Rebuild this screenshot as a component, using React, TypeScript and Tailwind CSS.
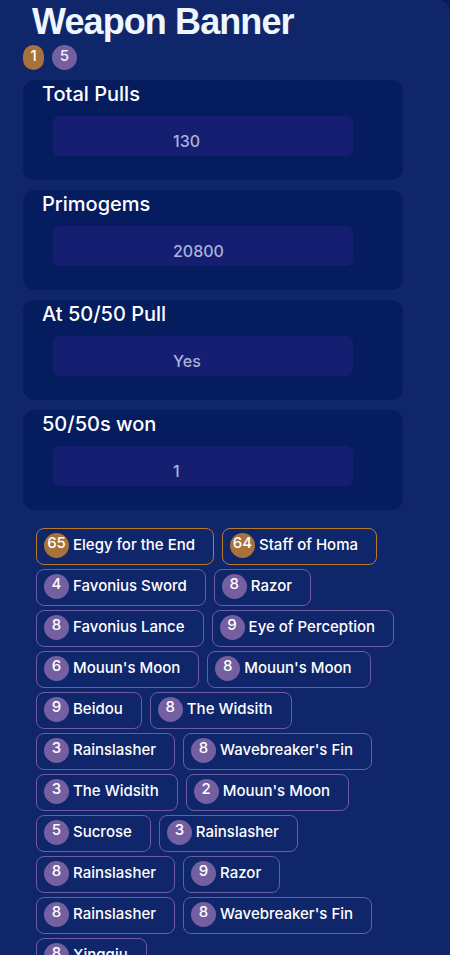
import React from "react";

type Pull = { count: number; name: string; gold?: boolean };

const stats = [
  { label: "Total Pulls", value: "130" },
  { label: "Primogems", value: "20800" },
  { label: "At 50/50 Pull", value: "Yes" },
  { label: "50/50s won", value: "1" },
];

const pulls: Pull[] = [
  { count: 65, name: "Elegy for the End", gold: true },
  { count: 64, name: "Staff of Homa", gold: true },
  { count: 4, name: "Favonius Sword" },
  { count: 8, name: "Razor" },
  { count: 8, name: "Favonius Lance" },
  { count: 9, name: "Eye of Perception" },
  { count: 6, name: "Mouun's Moon" },
  { count: 8, name: "Mouun's Moon" },
  { count: 9, name: "Beidou" },
  { count: 8, name: "The Widsith" },
  { count: 3, name: "Rainslasher" },
  { count: 8, name: "Wavebreaker's Fin" },
  { count: 3, name: "The Widsith" },
  { count: 2, name: "Mouun's Moon" },
  { count: 5, name: "Sucrose" },
  { count: 3, name: "Rainslasher" },
  { count: 8, name: "Rainslasher" },
  { count: 9, name: "Razor" },
  { count: 8, name: "Rainslasher" },
  { count: 8, name: "Wavebreaker's Fin" },
  { count: 8, name: "Xingqiu" },
];

function StatCard({ label, value }: { label: string; value: string }) {
  return (
    <div className="w-[380px] h-[100px] rounded-xl bg-[#051c5e] pl-[19px]">
      <div className="text-xl leading-7 font-medium text-white">{label}</div>
      <div className="mt-2 ml-[11px] w-[300px] h-10 rounded-md bg-[#151e70] pl-[120px] pt-[13px] text-base leading-6 font-medium text-[#aab4d7]">
        {value}
      </div>
    </div>
  );
}

function PullChip({ pull }: { pull: Pull }) {
  return (
    <div
      className={`flex items-center gap-1 h-[37px] rounded-lg border pl-[7px] pr-[18px] pt-[3px] pb-[6px] ${
        pull.gold ? "border-[#b97a28]" : "border-[#6e5aa0]"
      }`}
    >
      <span
        className={`flex items-center justify-center w-[25px] h-[25px] rounded-full pb-[3px] text-[15px] font-medium text-white ${
          pull.gold ? "bg-[#a8723a]" : "bg-[#7460a0]"
        }`}
      >
        {pull.count}
      </span>
      <span className="text-[15px] font-medium text-white">{pull.name}</span>
    </div>
  );
}

export default function App() {
  return (
    <div className="min-h-screen bg-[#0b1b4c] font-['Inter',sans-serif]">
      <div className="min-h-screen bg-[#10266a] rounded-tr-xl px-[23px] pt-[2px] pb-10">
        <h1 className="ml-[9px] font-['Liberation_Sans',Arial,sans-serif] text-4xl leading-10 font-bold tracking-tight text-[#eef6ff]">
          Weapon Banner
        </h1>
        <div className="flex gap-2 mt-[3px]">
          <span className="flex items-center justify-center w-[21px] h-[25px] rounded-full bg-[#a8723a] pb-[2px] text-[15px] font-medium text-white">
            1
          </span>
          <span className="flex items-center justify-center w-[25px] h-[25px] rounded-full bg-[#7460a0] pb-[2px] text-[15px] font-medium text-[#eeeeff]">
            5
          </span>
        </div>

        <div className="flex flex-col gap-[10px] mt-[10px]">
          {stats.map((s) => (
            <StatCard key={s.label} label={s.label} value={s.value} />
          ))}
        </div>

        <div className="flex flex-wrap gap-x-2 gap-y-1 mt-[18px] ml-[13px] w-[369px]">
          {pulls.map((p, i) => (
            <PullChip key={i} pull={p} />
          ))}
        </div>
      </div>
    </div>
  );
}
